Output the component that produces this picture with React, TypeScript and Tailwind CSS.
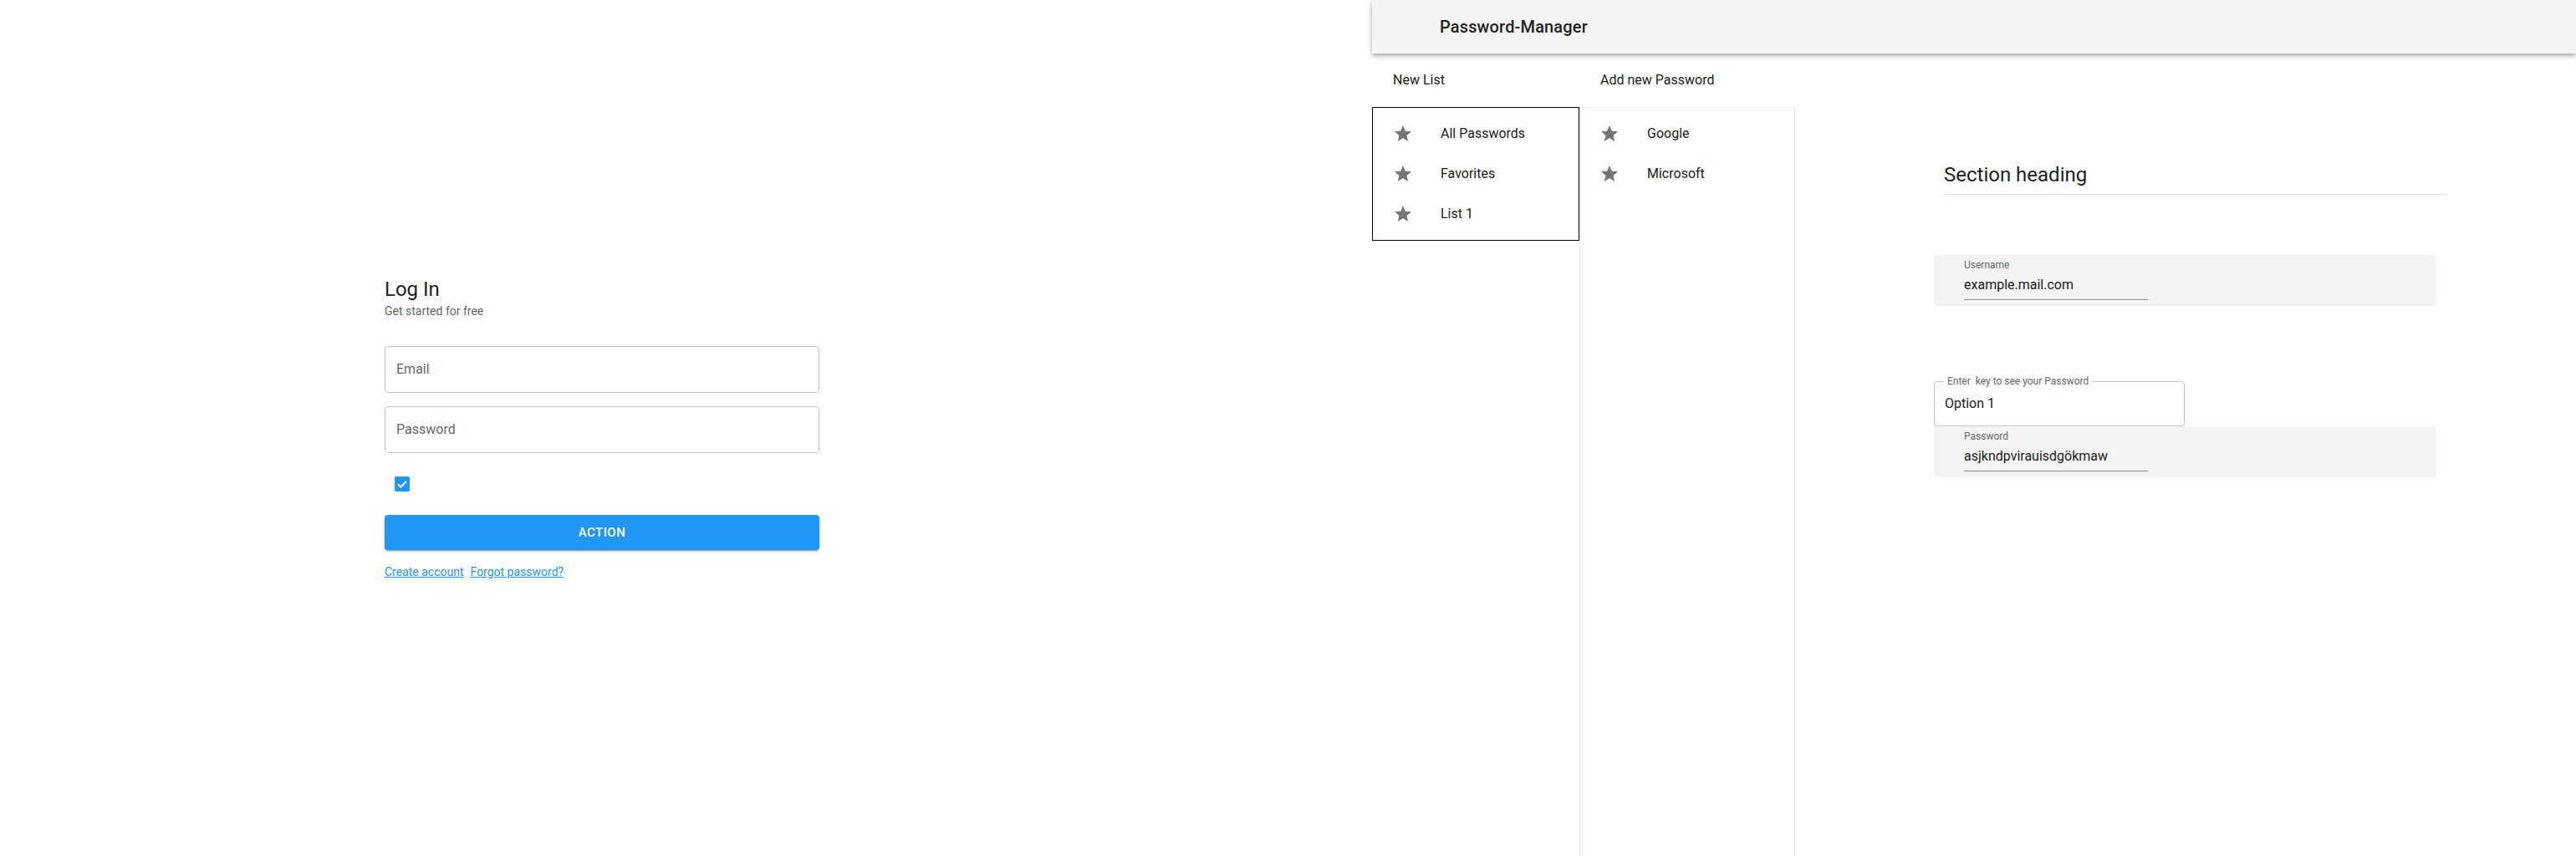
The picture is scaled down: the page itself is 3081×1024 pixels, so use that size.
import React from "react";

const Star = () => (
  <svg viewBox="0 0 24 24" width="24" height="24" className="shrink-0">
    <path
      fill="#757575"
      d="M12 17.27L18.18 21l-1.64-7.03L22 9.24l-7.19-.61L12 2 9.19 8.63 2 9.24l5.46 4.73L5.82 21z"
    />
  </svg>
);

const ListRow = ({ label }: { label: string }) => (
  <div className="flex h-[48px] items-center pl-[24px]">
    <Star />
    <span className="ml-[33px] text-[16px] leading-[24px] text-[#212121]">{label}</span>
  </div>
);

const FilledField = ({ label, value }: { label: string; value: string }) => (
  <div className="flex h-[61px] w-[600px] flex-col rounded-[4px] bg-[#f4f4f4] pl-[36px] pt-[4px]">
    <div className="w-[220px] border-b border-[#8c8c8c] pb-[5px]">
      <div className="text-[12px] leading-[16px] text-[#666666]">{label}</div>
      <div className="mt-[4px] text-[16px] leading-[24px] text-[#212121]">{value}</div>
    </div>
  </div>
);

export default function App() {
  return (
    <div
      className="flex h-[1024px] w-[3081px] overflow-hidden bg-white"
      style={{ fontFamily: "Roboto, 'Noto Sans', sans-serif" }}
    >
      {/* Login */}
      <div className="w-[1641px] shrink-0 pl-[460px] pt-[330px]">
        <div className="flex w-[520px] flex-col">
          <div className="text-[24px] leading-[32px] text-[#212121]">Log In</div>
          <div className="text-[14px] leading-[20px] text-[#666666]">Get started for free</div>
          <div className="mt-[32px] flex h-[56px] items-center rounded-[4px] border border-[#c4c4c4] pl-[13px] text-[16px] text-[#666666]">
            Email
          </div>
          <div className="mt-[16px] flex h-[56px] items-center rounded-[4px] border border-[#c4c4c4] pl-[13px] text-[16px] text-[#666666]">
            Password
          </div>
          <div className="ml-[12px] mt-[28px] flex h-[18px] w-[18px] items-center justify-center rounded-[2px] bg-[#2196f3]">
            <svg viewBox="0 0 24 24" width="18" height="18">
              <path
                d="M5.5 12.5l4.2 4.2L18.5 7.8"
                fill="none"
                stroke="white"
                strokeWidth="2.6"
              />
            </svg>
          </div>
          <div className="mt-[28px] flex h-[42px] items-center justify-center rounded-[4px] bg-[#2196f3] text-[15px] font-medium tracking-[0.46px] text-white shadow-[0_3px_1px_-2px_rgba(0,0,0,0.2),0_2px_2px_0_rgba(0,0,0,0.14),0_1px_5px_0_rgba(0,0,0,0.12)]">
            ACTION
          </div>
          <div className="mt-[16px] flex gap-[8px] text-[14px] leading-[20px] text-[#2196f3]">
            <span className="underline">Create account</span>
            <span className="underline">Forgot password?</span>
          </div>
        </div>
      </div>

      {/* Password manager */}
      <div className="flex flex-1 flex-col">
        <div className="relative z-10 flex h-[64px] shrink-0 items-center bg-[#f5f5f5] pl-[81px] shadow-[0_2px_4px_-1px_rgba(0,0,0,0.2),0_4px_5px_0_rgba(0,0,0,0.14),0_1px_10px_0_rgba(0,0,0,0.12)]">
          <span className="text-[20px] font-medium tracking-[0.15px] text-[#212121]">Password-Manager</span>
        </div>
        <div className="flex flex-1">
          {/* Column 1 */}
          <div className="flex w-[248px] shrink-0 flex-col">
            <div className="flex h-[64px] items-center pl-[25px] text-[16px] text-[#212121]">New List</div>
            <div className="border border-black py-[7px]">
              <ListRow label="All Passwords" />
              <ListRow label="Favorites" />
              <ListRow label="List 1" />
            </div>
          </div>
          {/* Column 2 */}
          <div className="flex w-[258px] shrink-0 flex-col">
            <div className="flex h-[64px] items-center pl-[25px] text-[16px] text-[#212121]">Add new Password</div>
            <div className="flex-1 border-x border-t border-x-[#e4e4e4] border-t-[#f2f2f2] pt-[7px]">
              <div className="-ml-px">
                <ListRow label="Google" />
                <ListRow label="Microsoft" />
              </div>
            </div>
          </div>
          {/* Column 3 */}
          <div className="flex flex-1 flex-col pl-[166px] pt-[129px]">
            <div className="ml-[12px] w-[600px] border-b border-[#e0e0e0] pb-[7px] text-[24px] leading-[32px] text-[#212121]">
              Section heading
            </div>
            <div className="mt-[72px]">
              <FilledField label="Username" value="example.mail.com" />
            </div>
            <fieldset className="mt-[82px] w-[300px] rounded-[4px] border border-[#c4c4c4] pl-[12px]">
              <legend className="-ml-[1px] whitespace-pre px-[4px] text-[12px] leading-[16px] text-[#666666]">
                Enter  key to see your Password
              </legend>
              <div className="pb-[14px] pt-[7px] text-[16px] leading-[24px] text-[#212121]">Option 1</div>
            </fieldset>
            <FilledField label="Password" value="asjkndpvirauisdgökmaw" />
          </div>
        </div>
      </div>
    </div>
  );
}
